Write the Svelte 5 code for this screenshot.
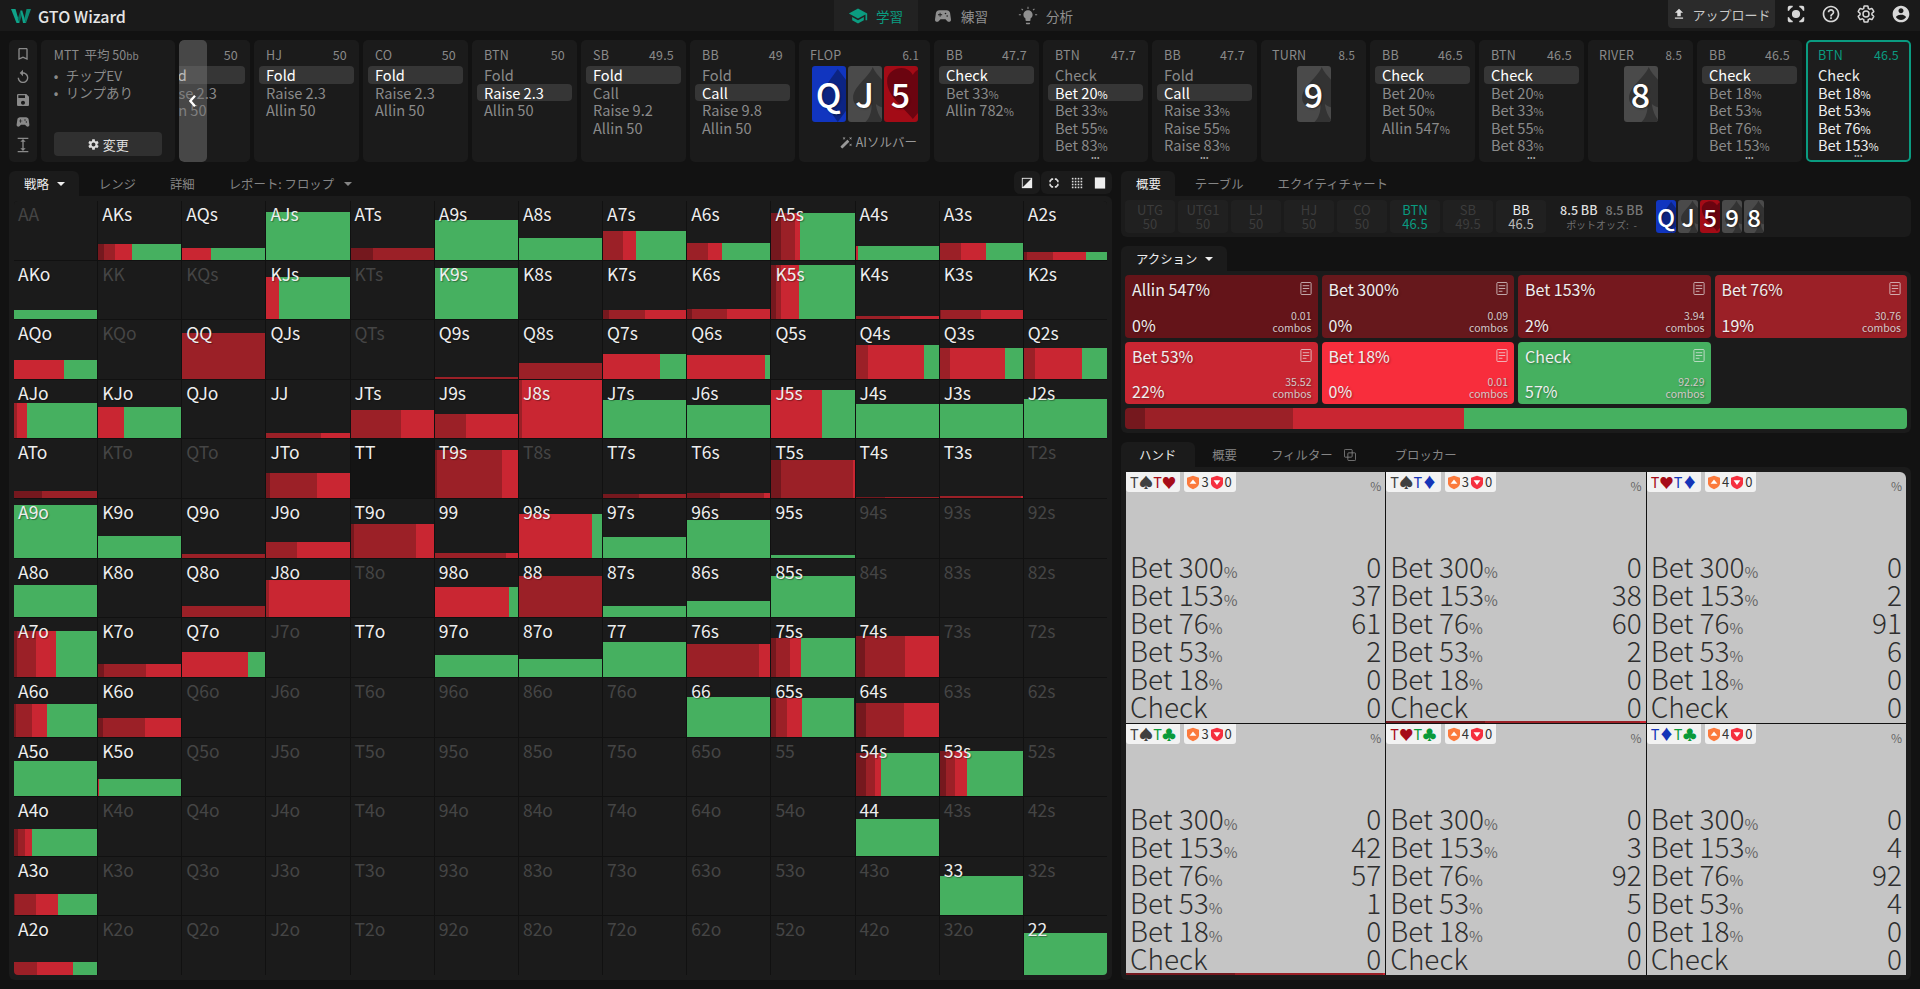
<script>
	const ranks = ['A', 'K', 'Q', 'J', 'T', '9', '8', '7', '6', '5', '4', '3', '2'];
	const colors = ['#75181e', '#9b2027', '#c92632', '#46b060'];

	// hand: [bar height %, dark, mid, bright, green]
	const strat = {
		AKs: [27, 7, 13, 21, 59], AQs: [20, 0, 0, 35, 65], AJs: [82, 0, 0, 0, 100], ATs: [20, 27, 73, 0, 0],
		A9s: [67, 0, 0, 0, 100], A8s: [37, 0, 0, 0, 100], A7s: [48, 0, 24, 16, 60], A6s: [28, 0, 25, 17, 58],
		A5s: [80, 11, 18, 5, 66], A4s: [23, 0, 0, 3, 97], A3s: [28, 0, 26, 30, 44], A2s: [13, 4, 31, 40, 25],
		AKo: [15, 0, 0, 0, 100], KJs: [72, 0, 0, 15, 85], K9s: [87, 0, 0, 0, 100], K8s: [1, 0, 0, 0, 100],
		K7s: [15, 7, 44, 49, 0], K6s: [17, 6, 42, 52, 0], K5s: [92, 6, 6, 21, 67], K4s: [5, 0, 54, 46, 0],
		K3s: [15, 2, 48, 50, 0], K2s: [0],
		AQo: [32, 0, 0, 60, 40], QQ: [78, 0, 100, 0, 0], QJs: [0], Q9s: [3, 0, 100, 0, 0], Q8s: [27, 0, 100, 0, 0],
		Q7s: [43, 0, 0, 68, 32], Q6s: [40, 0, 0, 94, 6], Q5s: [0], Q4s: [57, 0, 15, 67, 18], Q3s: [53, 0, 12, 66, 22],
		Q2s: [52, 0, 14, 56, 30],
		AJo: [60, 0, 4, 12, 84], KJo: [54, 0, 0, 31, 69], QJo: [0], JJ: [10, 0, 66, 34, 0], JTs: [49, 0, 60, 40, 0],
		J9s: [41, 0, 38, 62, 0], J8s: [100, 0, 4, 96, 0], J7s: [66, 0, 0, 0, 100], J6s: [57, 0, 0, 0, 100],
		J5s: [82, 0, 0, 61, 39], J4s: [59, 0, 0, 0, 100], J3s: [59, 0, 0, 0, 100], J2s: [67, 0, 0, 0, 100],
		ATo: [12, 34, 66, 0, 0], JTo: [42, 4, 57, 39, 0], TT: [0], T9s: [82, 3, 78, 19, 0], T7s: [7, 43, 57, 0, 0],
		T6s: [8, 39, 53, 8, 0], T5s: [65, 12, 86, 2, 0], T4s: [2, 36, 64, 0, 0], T3s: [3, 0, 98, 2, 0],
		A9o: [90, 0, 0, 0, 100], K9o: [37, 0, 0, 0, 100], Q9o: [7, 0, 100, 0, 0], J9o: [27, 0, 37, 63, 0],
		T9o: [58, 4, 75, 21, 0], 99: [8, 0, 86, 14, 0], '98s': [75, 0, 0, 88, 12], '97s': [35, 0, 0, 0, 100],
		'96s': [65, 0, 0, 0, 100], '95s': [5, 0, 0, 0, 100],
		A8o: [55, 0, 0, 0, 100], K8o: [0], Q8o: [20, 0, 100, 0, 0], J8o: [63, 0, 3, 97, 0], '98o': [52, 0, 0, 89, 11],
		88: [70, 0, 100, 0, 0], '87s': [20, 0, 0, 0, 100], '86s': [28, 0, 0, 0, 100], '85s': [70, 0, 0, 0, 100],
		A7o: [78, 4, 22, 24, 50], K7o: [22, 7, 51, 42, 0], Q7o: [43, 0, 0, 79, 21], T7o: [0], '97o': [37, 0, 0, 0, 100],
		'87o': [30, 0, 0, 0, 100], 77: [60, 0, 0, 0, 100], '76s': [57, 0, 86, 14, 0], '75s': [67, 5, 17, 14, 64],
		'74s': [70, 11, 49, 40, 0],
		A6o: [55, 3, 19, 18, 60], K6o: [32, 6, 50, 44, 0], 66: [67, 0, 0, 0, 100], '65s': [65, 6, 13, 18, 63],
		'64s': [57, 12, 46, 42, 0],
		A5o: [60, 0, 0, 0, 100], K5o: [30, 0, 0, 1, 99], '54s': [73, 12, 12, 7, 69], '53s': [77, 7, 11, 15, 67],
		A4o: [45, 5, 8, 9, 78], 44: [62, 0, 0, 0, 100],
		A3o: [37, 1, 25, 27, 47], 33: [68, 0, 0, 0, 100],
		A2o: [22, 0, 28, 43, 29], 22: [72, 0, 0, 0, 100]
	};

	let hands = [];
	ranks.forEach((r, i) => {
		ranks.forEach((c, j) => {
			let name = i == j ? r + c : i < j ? r + c + 's' : c + r + 'o';
			hands.push({ name, data: strat[name] });
		});
	});

	const history = [
		{ pos: 'HJ', val: '50', acts: ['Fold', 'Raise 2.3', 'Allin 50'], on: 0 },
		{ pos: 'CO', val: '50', acts: ['Fold', 'Raise 2.3', 'Allin 50'], on: 0 },
		{ pos: 'BTN', val: '50', acts: ['Fold', 'Raise 2.3', 'Allin 50'], on: 1 },
		{ pos: 'SB', val: '49.5', acts: ['Fold', 'Call', 'Raise 9.2', 'Allin 50'], on: 0 },
		{ pos: 'BB', val: '49', acts: ['Fold', 'Call', 'Raise 9.8', 'Allin 50'], on: 1 },
		{ street: 'FLOP', val: '6.1', cards: [['Q', 'd'], ['J', 's'], ['5', 'h']] },
		{ pos: 'BB', val: '47.7', acts: ['Check', 'Bet 33%', 'Allin 782%'], on: 0 },
		{ pos: 'BTN', val: '47.7', acts: ['Check', 'Bet 20%', 'Bet 33%', 'Bet 55%', 'Bet 83%'], on: 1, more: true },
		{ pos: 'BB', val: '47.7', acts: ['Fold', 'Call', 'Raise 33%', 'Raise 55%', 'Raise 83%'], on: 1, more: true },
		{ street: 'TURN', val: '8.5', cards: [['9', 's']] },
		{ pos: 'BB', val: '46.5', acts: ['Check', 'Bet 20%', 'Bet 50%', 'Allin 547%'], on: 0 },
		{ pos: 'BTN', val: '46.5', acts: ['Check', 'Bet 20%', 'Bet 33%', 'Bet 55%', 'Bet 83%'], on: 0, more: true },
		{ street: 'RIVER', val: '8.5', cards: [['8', 's']] },
		{ pos: 'BB', val: '46.5', acts: ['Check', 'Bet 18%', 'Bet 53%', 'Bet 76%', 'Bet 153%'], on: 0, more: true },
		{ pos: 'BTN', val: '46.5', acts: ['Check', 'Bet 18%', 'Bet 53%', 'Bet 76%', 'Bet 153%'], on: -1, more: true, current: true }
	];

	const seats = [
		{ name: 'UTG', val: '50' },
		{ name: 'UTG1', val: '50' },
		{ name: 'LJ', val: '50' },
		{ name: 'HJ', val: '50' },
		{ name: 'CO', val: '50' },
		{ name: 'BTN', val: '46.5', cls: 'hero' },
		{ name: 'SB', val: '49.5' },
		{ name: 'BB', val: '46.5', cls: 'live' }
	];

	const actions = [
		{ name: 'Allin 547%', pct: '0%', combos: '0.01', bg: '#641419' },
		{ name: 'Bet 300%', pct: '0%', combos: '0.09', bg: '#66181c' },
		{ name: 'Bet 153%', pct: '2%', combos: '3.94', bg: '#75181e' },
		{ name: 'Bet 76%', pct: '19%', combos: '30.76', bg: '#9b2027' },
		{ name: 'Bet 53%', pct: '22%', combos: '35.52', bg: '#c92632' },
		{ name: 'Bet 18%', pct: '0%', combos: '0.01', bg: '#f82d3c' },
		{ name: 'Check', pct: '57%', combos: '92.29', bg: '#46b060' }
	];

	const lines = ['Bet 300', 'Bet 153', 'Bet 76', 'Bet 53', 'Bet 18', 'Check'];
	const suitGlyph = { s: '♠', h: '♥', d: '♦', c: '♣' };
	const combos = [
		{ a: 's', b: 'h', up: 3, vals: [0, 37, 61, 2, 0, 0] },
		{ a: 's', b: 'd', up: 3, vals: [0, 38, 60, 2, 0, 0], bar: [38, 60, 2] },
		{ a: 'h', b: 'd', up: 4, vals: [0, 2, 91, 6, 0, 0] },
		{ a: 's', b: 'c', up: 3, vals: [0, 42, 57, 1, 0, 0], bar: [42, 57, 1] },
		{ a: 'h', b: 'c', up: 4, vals: [0, 3, 92, 5, 0, 0] },
		{ a: 'd', b: 'c', up: 4, vals: [0, 4, 92, 4, 0, 0] }
	];
</script>

{#snippet label(text)}
	{#if text.endsWith('%')}{text.slice(0, -1)}<small>%</small>{:else}{text}{/if}
{/snippet}

{#snippet card(rank, suit, mini)}
	<div class="card {suit}" class:mini>
		<svg viewBox="0 0 33 56" preserveAspectRatio="none">
			{#if suit == 'd'}
				<polygon points="25,3 44,29 25,56 7,29" />
			{:else if suit == 's'}
				<path d="M24 1C28 12 44 20 43 34C42 43 32 43 27 38C28 46 31 52 35 56H17C21 52 23 46 23 38C18 44 6 43 5 33C4 21 20 12 24 1Z" />
			{:else}
				<path d="M28 53C18 40 3 30 3 15C3 6 11 2 17 2C22 2 26 5 28 9C30 5 34 2 40 2C46 2 52 6 52 15C52 30 38 40 28 53Z" />
			{/if}
		</svg>
		<span>{rank}</span>
	</div>
{/snippet}

{#snippet gear()}
	<path d="M19.14 12.94c.04-.3.06-.61.06-.94 0-.32-.02-.64-.07-.94l2.03-1.58c.18-.14.23-.41.12-.61l-1.92-3.32c-.12-.22-.37-.29-.59-.22l-2.39.96c-.5-.38-1.03-.7-1.62-.94l-.36-2.54c-.04-.24-.24-.41-.48-.41h-3.84c-.24 0-.43.17-.47.41l-.36 2.54c-.59.24-1.13.57-1.62.94l-2.39-.96c-.22-.08-.47 0-.59.22L2.74 8.87c-.12.21-.08.47.12.61l2.03 1.58c-.05.3-.09.63-.09.94s.02.64.07.94l-2.03 1.58c-.18.14-.23.41-.12.61l1.92 3.32c.12.22.37.29.59.22l2.39-.96c.5.38 1.03.7 1.62.94l.36 2.54c.05.24.24.41.48.41h3.84c.24 0 .44-.17.47-.41l.36-2.54c.59-.24 1.13-.56 1.62-.94l2.39.96c.22.08.47 0 .59-.22l1.92-3.32c.12-.22.07-.47-.12-.61l-2.01-1.58zM12 15.6c-1.98 0-3.6-1.62-3.6-3.6s1.62-3.6 3.6-3.6 3.6 1.62 3.6 3.6-1.62 3.6-3.6 3.6z" />
{/snippet}

{#snippet gamepad()}
	<path d="M21.58 16.09l-1.09-7.66C20.21 6.46 18.52 5 16.53 5H7.47C5.48 5 3.79 6.46 3.51 8.43l-1.09 7.66C2.2 17.63 3.39 19 4.94 19c.68 0 1.32-.27 1.8-.75L9 16h6l2.25 2.25c.48.48 1.13.75 1.8.75 1.56 0 2.75-1.37 2.53-2.91zM11 11H9v2H8v-2H6v-1h2V8h1v2h2v1zm4-1c-.55 0-1-.45-1-1s.45-1 1-1 1 .45 1 1-.45 1-1 1zm2 3c-.55 0-1-.45-1-1s.45-1 1-1 1 .45 1 1-.45 1-1 1z" />
{/snippet}

<div class="page">
	<header class="topbar">
		<div class="brand">
			<svg class="logo" viewBox="0 0 20 14">
				<polygon points="0,0 4.5,0 8.5,14 5.5,14" fill="#0fa389" />
				<polygon points="6.8,9.5 9.4,1.5 11.2,5 8.5,14" fill="#0a6f5d" />
				<polygon points="9.4,1.5 11.2,1.5 15,14 12,14" fill="#0fa389" />
				<polygon points="15.5,0 20,0 15,14 13.5,9.5" fill="#0c8a73" />
			</svg>
			<span>GTO Wizard</span>
		</div>
		<nav class="nav">
			<div class="nav-item active">
				<svg viewBox="0 0 24 24"><path d="M5 13.18v4L12 21l7-3.82v-4L12 17l-7-3.82zM12 3L1 9l11 6 9-4.91V17h2V9L12 3z" /></svg>
				学習
			</div>
			<div class="nav-item">
				<svg viewBox="0 0 24 24">{@render gamepad()}</svg>
				練習
			</div>
			<div class="nav-item">
				<svg viewBox="0 0 24 24">
					<path d="M9.5 21c0 .55.45 1 1 1h3c.55 0 1-.45 1-1v-1h-5v1zM12 5c-3 0-5.5 2.4-5.5 5.4 0 1.9 1 3.5 2.5 4.5V17c0 .55.45 1 1 1h4c.55 0 1-.45 1-1v-2.1c1.5-1 2.5-2.6 2.5-4.5C17.5 7.4 15 5 12 5z" />
					<path d="M11.4 1h1.2v2.5h-1.2zM3.8 3.8l.9-.9 1.7 1.7-.9.9zM19.3 2.9l.9.9-1.7 1.7-.9-.9zM1 10h2.5v1.2H1zM20.5 10H23v1.2h-2.5z" />
				</svg>
				分析
			</div>
		</nav>
		<div class="tools">
			<div class="upload">
				<svg viewBox="0 0 24 24"><path d="M9 16h6v-6h4l-7-7-7 7h4v6zm-4 2h14v2H5v-2z" /></svg>
				アップロード
			</div>
			<svg class="tool" viewBox="0 0 24 24" fill="none" stroke="currentColor" stroke-width="1.8">
				<path d="M3 8V4.5C3 3.7 3.7 3 4.5 3H8M16 3h3.5c.8 0 1.5.7 1.5 1.5V8M21 16v3.5c0 .8-.7 1.5-1.5 1.5H16M8 21H4.5C3.7 21 3 20.3 3 19.5V16" />
				<circle cx="12" cy="12" r="4" />
			</svg>
			<svg class="tool" viewBox="0 0 24 24"><path d="M11 18h2v-2h-2v2zm1-16C6.48 2 2 6.48 2 12s4.48 10 10 10 10-4.48 10-10S17.52 2 12 2zm0 18c-4.41 0-8-3.59-8-8s3.59-8 8-8 8 3.59 8 8-3.59 8-8 8zm0-14c-2.21 0-4 1.79-4 4h2c0-1.1.9-2 2-2s2 .9 2 2c0 2-3 1.75-3 5h2c0-2.25 3-2.5 3-5 0-2.21-1.79-4-4-4z" /></svg>
			<svg class="tool gear" viewBox="0 0 24 24">{@render gear()}</svg>
			<svg class="tool" viewBox="0 0 24 24"><path d="M12 2C6.48 2 2 6.48 2 12s4.48 10 10 10 10-4.48 10-10S17.52 2 12 2zm0 3c1.66 0 3 1.34 3 3s-1.34 3-3 3-3-1.34-3-3 1.34-3 3-3zm0 14.2c-2.5 0-4.71-1.28-6-3.22.03-1.99 4-3.08 6-3.08 1.99 0 5.97 1.09 6 3.08-1.29 1.94-3.5 3.22-6 3.22z" /></svg>
		</div>
	</header>

	<section class="history">
		<div class="side-icons">
			<svg viewBox="0 0 24 24"><path d="M17 3H7c-1.1 0-2 .9-2 2v16l7-3 7 3V5c0-1.1-.9-2-2-2zm0 15l-5-2.18L7 18V5h10v13z" /></svg>
			<svg viewBox="0 0 24 24"><path d="M12 5V1L7 6l5 5V7c3.31 0 6 2.69 6 6s-2.69 6-6 6-6-2.69-6-6H4c0 4.42 3.58 8 8 8s8-3.58 8-8-3.58-8-8-8z" /></svg>
			<svg viewBox="0 0 24 24"><path d="M17 3H5c-1.11 0-2 .9-2 2v14c0 1.1.89 2 2 2h14c1.1 0 2-.9 2-2V7l-4-4zm-5 16c-1.66 0-3-1.34-3-3s1.34-3 3-3 3 1.34 3 3-1.34 3-3 3zm3-10H5V5h10v4z" /></svg>
			<svg viewBox="0 0 24 24">{@render gamepad()}</svg>
			<svg viewBox="0 0 24 24"><path d="M13 6.99h3L12 3 8 6.99h3v10.02H8L12 21l4-3.99h-3zM4 1h16v2H4zM4 21h16v2H4z" /></svg>
		</div>

		<div class="info">
			<div class="info-title">MTT&nbsp; 平均 50<small>bb</small></div>
			<ul>
				<li>チップEV</li>
				<li>リンプあり</li>
			</ul>
			<div class="change">
				<svg viewBox="0 0 24 24">{@render gear()}</svg>
				変更
			</div>
		</div>

		<div class="scrolled">
			<div class="hist-card inner">
				<div class="hist-head"><span></span><span>50</span></div>
				<div class="act on">Fold</div>
				<div class="act">Raise 2.3</div>
				<div class="act">Allin 50</div>
			</div>
			<div class="scroll-btn">
				<svg viewBox="0 0 24 24" fill="none" stroke="currentColor" stroke-width="3.5"><path d="M15 4l-7 8 7 8" /></svg>
			</div>
		</div>

		{#each history as h}
			{#if h.street}
				<div class="hist-card street" class:flop={h.cards.length > 1}>
					<div class="hist-head"><span>{h.street}</span><span class="pot">{h.val}</span></div>
					<div class="board">
						{#each h.cards as c}
							{@render card(c[0], c[1], false)}
						{/each}
					</div>
					{#if h.cards.length > 1}
						<div class="solver">
							<svg viewBox="0 0 24 24"><path d="M7.5 5.6L10 7 8.6 4.5 10 2 7.5 3.4 5 2l1.4 2.5L5 7zm12 9.8L17 14l1.4 2.5L17 19l2.5-1.4L22 19l-1.4-2.5L22 14zM22 2l-2.5 1.4L17 2l1.4 2.5L17 7l2.5-1.4L22 7l-1.4-2.5zm-7.63 5.29c-.39-.39-1.02-.39-1.41 0L1.29 18.96c-.39.39-.39 1.02 0 1.41l2.34 2.34c.39.39 1.02.39 1.41 0L16.7 11.05c.39-.39.39-1.02 0-1.41l-2.33-2.35z" /></svg>
							AIソルバー
						</div>
					{/if}
				</div>
			{:else}
				<div class="hist-card" class:current={h.current}>
					<div class="hist-head"><span>{h.pos}</span><span>{h.val}</span></div>
					{#each h.acts as a, i}
						<div class="act" class:on={i == h.on}>{@render label(a)}</div>
					{/each}
					{#if h.more}<div class="more">•••</div>{/if}
				</div>
			{/if}
		{/each}
	</section>

	<main class="content">
		<div class="left">
			<div class="tabs-row">
				<div class="tabs">
					<div class="tab active">戦略 <i class="caret"></i></div>
					<div class="tab first">レンジ</div>
					<div class="tab">詳細</div>
					<div class="tab">レポート: フロップ <i class="caret dim"></i></div>
				</div>
				<div class="view-tools">
					<div class="view-box">
						<svg viewBox="0 0 14 14"><rect x="1" y="1" width="12" height="12" fill="#eee" /><polygon points="2,2 12,2 2,12" fill="#222" /></svg>
					</div>
					<div class="view-box wide">
						<svg viewBox="0 0 14 14" fill="none" stroke="#ddd" stroke-width="1.8"><path d="M6 2.5H4.5L2.5 4.5V6M8 2.5H9.5L11.5 4.5V6M2.5 8V9.5L4.5 11.5H6M8 11.5H9.5L11.5 9.5V8" /></svg>
						<svg viewBox="0 0 14 14" fill="#ddd">
							{#each [1, 4.4, 7.8, 11.2] as y}
								{#each [1, 4.4, 7.8, 11.2] as x}
									<rect {x} {y} width="1.9" height="1.9" />
								{/each}
							{/each}
						</svg>
						<svg viewBox="0 0 14 14"><rect x="1" y="0.5" width="12" height="13" fill="#eee" /></svg>
					</div>
				</div>
			</div>
			<div class="matrix-panel">
				<div class="matrix">
					{#each hands as h}
						<div class="hand" class:dim={!h.data} class:dark={h.name == 'TT'}>
							{#if h.data && h.data[0]}
								<div class="bar" style="height:{h.data[0]}%">
									{#each h.data.slice(1) as w, i}
										{#if w}<div style="width:{w}%;background:{colors[i]}"></div>{/if}
									{/each}
								</div>
							{/if}
							<span>{h.name}</span>
						</div>
					{/each}
				</div>
			</div>
		</div>

		<div class="right">
			<div class="tabs-row">
				<div class="tabs">
					<div class="tab active">概要</div>
					<div class="tab first">テーブル</div>
					<div class="tab">エクイティチャート</div>
				</div>
			</div>
			<div class="seatbar">
				{#each seats as s}
					<div class="seat {s.cls || ''}">
						<b>{s.name}</b>
						<em>{s.val}</em>
					</div>
				{/each}
				<div class="pot-info">
					<div class="pots"><span>8.5 BB</span><span class="grey">8.5 BB</span></div>
					<div class="odds">ポットオッズ:&nbsp; -</div>
				</div>
				<div class="mini-board">
					{@render card('Q', 'd', true)}
					{@render card('J', 's', true)}
					{@render card('5', 'h', true)}
					{@render card('9', 's', true)}
					{@render card('8', 's', true)}
				</div>
			</div>

			<div class="tabs-row gap">
				<div class="tabs">
					<div class="tab active">アクション <i class="caret"></i></div>
				</div>
			</div>
			<div class="action-panel">
				<div class="action-grid">
					{#each actions as a}
						<div class="action" style="background:{a.bg}">
							<div class="action-top">
								<span>{a.name}</span>
								<svg viewBox="0 0 12 14" fill="none" stroke="currentColor" stroke-width="1">
									<rect x="0.5" y="0.5" width="11" height="13" rx="1" />
									<path d="M2.5 4h7M2.5 7h7M2.5 10h4" />
								</svg>
							</div>
							<div class="action-bottom">
								<span>{a.pct}</span>
								<div class="combos">{a.combos}<br />combos</div>
							</div>
						</div>
					{/each}
				</div>
				<div class="total-bar">
					<div style="width:2.5%;background:#75181e"></div>
					<div style="width:19%;background:#9b2027"></div>
					<div style="width:21.8%;background:#c92632"></div>
					<div style="width:56.7%;background:#46b060"></div>
				</div>
			</div>

			<div class="tabs-row gap">
				<div class="tabs">
					<div class="tab active hand-tab">ハンド</div>
					<div class="tab">概要</div>
					<div class="tab filter">
						フィルター
						<svg class="copy" viewBox="0 0 14 14" fill="none" stroke="currentColor"><rect x="0.5" y="0.5" width="9" height="9" rx="1" /><rect x="4.5" y="4.5" width="9" height="9" rx="1" /></svg>
					</div>
					<div class="tab">ブロッカー</div>
				</div>
			</div>
			<div class="hand-panel">
				<div class="combo-grid">
					{#each combos as c}
						<div class="combo">
							<div class="combo-head">
								<div class="chip">
									<span class={c.a}>T{suitGlyph[c.a]}</span><span class={c.b}>T{suitGlyph[c.b]}</span>
								</div>
								<div class="chip blockers">
									<svg viewBox="0 0 14 16"><path d="M7 0L14 2.5V9C14 12.5 10 15 7 16C4 15 0 12.5 0 9V2.5z" fill="#fb7a3c" /><path d="M7 4.5L11 9.5H3z" fill="#fff" /></svg>
									<span>{c.up}</span>
									<svg viewBox="0 0 14 16"><path d="M7 0L14 2.5V9C14 12.5 10 15 7 16C4 15 0 12.5 0 9V2.5z" fill="#f5303f" /><path d="M7 11L3 5.5H11z" fill="#fff" /></svg>
									<span>0</span>
								</div>
								<div class="pct-head">%</div>
							</div>
							<div class="combo-lines">
								{#each lines as l, i}
									<div class="combo-line">
										<span>{l}{#if l != 'Check'}<small>%</small>{/if}</span>
										<span>{c.vals[i]}</span>
									</div>
								{/each}
							</div>
							{#if c.bar}
								<div class="combo-bar">
									<div style="width:{c.bar[0]}%;background:#75181e"></div>
									<div style="width:{c.bar[1]}%;background:#9b2027"></div>
									<div style="width:{c.bar[2]}%;background:#c92632"></div>
								</div>
							{/if}
						</div>
					{/each}
				</div>
			</div>
		</div>
	</main>
</div>

<style>
	:global(body) {
		background: #121212;
		overflow: hidden;
	}

	.page {
		height: 989px;
		display: flex;
		flex-direction: column;
		font-family: 'Noto Sans CJK JP', 'Noto Sans', sans-serif;
		color: #8a8a8a;
		font-size: 13px;
	}

	small {
		font-size: 0.8em;
	}

	/* top bar */
	.topbar {
		height: 31px;
		background: #1a1a1a;
		display: flex;
		align-items: center;
		flex: none;
	}
	.brand {
		display: flex;
		align-items: center;
		margin-left: 11px;
		gap: 7px;
		color: #e6e6e6;
		font-size: 16px;
		font-weight: 500;
		width: 115px;
		white-space: nowrap;
	}
	.logo {
		width: 20px;
		height: 14px;
		flex: none;
	}
	.nav {
		display: flex;
		margin-left: 708px;
		height: 31px;
		font-size: 13.5px;
	}
	.nav-item {
		display: flex;
		align-items: center;
		gap: 8px;
		padding: 0 15px;
		color: #8f8f8f;
	}
	.nav-item svg {
		width: 20px;
		height: 20px;
		fill: currentColor;
	}
	.nav-item.active {
		background: #222;
		color: #0b9c80;
		padding: 0 15px 0 14px;
	}
	.tools {
		margin-left: auto;
		display: flex;
		align-items: center;
		gap: 15px;
		padding-right: 9px;
		height: 31px;
		align-self: flex-start;
	}
	.upload {
		display: flex;
		align-items: center;
		justify-content: center;
		gap: 6px;
		width: 107px;
		height: 28px;
		margin-top: -3px;
		margin-right: -4px;
		background: #2b2b2b;
		border-radius: 0 0 4px 4px;
		color: #c8c8c8;
		font-size: 13px;
		white-space: nowrap;
	}
	.upload svg {
		width: 14px;
		height: 14px;
		fill: #ddd;
		flex: none;
	}
	.tool {
		width: 20px;
		height: 20px;
		fill: #d8d8d8;
		color: #d8d8d8;
		margin-top: -3px;
	}
	.tool.gear {
		fill: none;
		stroke: #d8d8d8;
		stroke-width: 1.8;
	}

	/* hand history strip */
	.history {
		height: 122px;
		margin: 9px 9px 0;
		display: flex;
		gap: 4px;
		flex: none;
	}
	.side-icons {
		width: 28px;
		background: #1b1b1b;
		border-radius: 5px;
		display: flex;
		flex-direction: column;
		align-items: center;
		justify-content: space-between;
		padding: 6px 0 9px;
		box-sizing: border-box;
	}
	.side-icons svg {
		width: 16px;
		height: 16px;
		fill: #8a8a8a;
	}
	.info {
		width: 135px;
		background: #1b1b1b;
		border-radius: 5px;
		padding: 5px 13px;
		box-sizing: border-box;
		display: flex;
		flex-direction: column;
		font-size: 13px;
	}
	.info-title {
		font-size: 12.5px;
		line-height: 20px;
		color: #8a8a8a;
	}
	.info ul {
		list-style: none;
		margin: 1px 0 0;
		padding: 0;
	}
	.info li {
		height: 17px;
		line-height: 17px;
		padding-left: 12px;
		position: relative;
		font-size: 13.5px;
	}
	.info li::before {
		content: '•';
		position: absolute;
		left: 0;
	}
	.change {
		margin-top: auto;
		margin-bottom: 1px;
		height: 24px;
		width: 108px;
		background: #303030;
		border-radius: 4px;
		color: #ddd;
		display: flex;
		align-items: center;
		justify-content: center;
		gap: 3px;
	}
	.change svg {
		width: 13px;
		height: 13px;
		fill: #ddd;
	}

	.scrolled {
		width: 71px;
		border-radius: 5px;
		overflow: hidden;
		position: relative;
		display: flex;
		justify-content: flex-end;
		background: #1b1b1b;
		flex: none;
	}
	.scroll-btn {
		position: absolute;
		left: 0;
		top: 0;
		bottom: 0;
		width: 28px;
		background: rgba(115, 115, 115, 0.5);
		border-radius: 5px;
		color: #fff;
		display: flex;
		align-items: center;
		justify-content: center;
	}
	.scroll-btn svg {
		width: 16px;
		height: 16px;
	}

	.hist-card {
		width: 105px;
		flex: none;
		box-sizing: border-box;
		background: #1b1b1b;
		border-radius: 5px;
		padding: 6px 5px 0;
		position: relative;
	}
	.hist-head {
		display: flex;
		justify-content: space-between;
		height: 18px;
		line-height: 18px;
		padding: 0 7px;
		font-size: 12.5px;
		margin-bottom: 2px;
		color: #8a8a8a;
		letter-spacing: 0.2px;
	}
	.act {
		height: 17.5px;
		line-height: 17.5px;
		padding: 0 7px;
		border-radius: 4px;
		font-size: 14.6px;
		color: #8a8a8a;
		white-space: nowrap;
	}
	.act small {
		font-size: 11px;
	}
	.act.on {
		background: #363636;
		color: #fff;
	}
	.more {
		position: absolute;
		left: 0;
		right: 0;
		bottom: 2px;
		text-align: center;
		font-size: 7px;
		line-height: 6px;
		letter-spacing: 0.4px;
		color: #aaa;
	}
	.hist-card.current {
		border: 2px solid #0a9b80;
		padding: 4px 3px 0;
		background: #1d1d1d;
	}
	.current .hist-head {
		color: #0a9b80;
	}
	.current .act {
		color: #eee;
	}
	.street.flop {
		width: 131px;
	}
	.street .hist-head {
		padding: 0 6px;
	}
	.pot {
		font-size: 11.5px;
	}
	.board {
		display: flex;
		justify-content: center;
		gap: 2px;
	}
	.solver {
		margin-top: 11px;
		font-size: 12.5px;
		color: #999;
		display: flex;
		justify-content: flex-end;
		align-items: center;
		gap: 3px;
		padding-right: 8px;
		line-height: 18px;
	}
	.solver svg {
		width: 13px;
		height: 13px;
		fill: #999;
	}

	/* playing cards */
	.card {
		width: 34px;
		height: 56px;
		border-radius: 3px;
		position: relative;
		overflow: hidden;
		display: flex;
		align-items: center;
		justify-content: center;
		color: #fff;
		font-size: 34px;
		font-weight: 500;
	}
	.card svg {
		position: absolute;
		inset: 0;
		width: 100%;
		height: 100%;
	}
	.card span {
		position: relative;
		line-height: 1;
		text-shadow: 1px 1px 2px rgba(0, 0, 0, 0.4);
	}
	.card.d {
		background: #1135bf;
	}
	.card.d svg {
		fill: #0c2483;
	}
	.card.s {
		background: #4a4a4a;
	}
	.card.s svg {
		fill: #333;
	}
	.card.h {
		background: #a30b16;
	}
	.card.h svg {
		fill: #6b0410;
	}
	.card.mini {
		width: 20px;
		height: 33px;
		font-size: 24px;
	}

	/* tabs */
	.tabs-row {
		height: 25px;
		display: flex;
		justify-content: space-between;
		flex: none;
	}
	.tabs-row.gap {
		margin-top: 9px;
	}
	.tabs {
		display: flex;
	}
	.tab {
		display: flex;
		align-items: center;
		gap: 6px;
		padding: 0 17px;
		font-size: 12.4px;
		color: #858585;
		white-space: nowrap;
	}
	.tab.first {
		padding-left: 20px;
	}
	.tab.active {
		background: #1b1b1b;
		color: #eee;
		border-radius: 6px 6px 0 0;
		padding: 0 14px 0 15px;
	}
	.tab.hand-tab {
		padding: 0 19px 0 18px;
	}
	.tab.filter {
		padding-right: 22px;
	}
	.caret {
		width: 0;
		height: 0;
		margin-left: 2px;
		border-left: 4px solid transparent;
		border-right: 4px solid transparent;
		border-top: 4px solid #eee;
	}
	.caret.dim {
		border-top-color: #858585;
		margin-left: 4px;
	}
	.copy {
		width: 12px;
		height: 12px;
		margin-left: 5px;
	}
	.view-tools {
		display: flex;
		gap: 1px;
		height: 23px;
	}
	.view-box {
		background: #1b1b1b;
		border-radius: 6px;
		width: 26px;
		display: flex;
		align-items: center;
		justify-content: center;
	}
	.view-box svg {
		width: 12px;
		height: 12px;
	}
	.view-box.wide {
		width: 71px;
		gap: 11px;
	}

	/* main layout */
	.content {
		flex: 1;
		display: flex;
		gap: 9px;
		padding: 9px;
		min-height: 0;
	}
	.left {
		width: 1103px;
		display: flex;
		flex-direction: column;
	}
	.right {
		width: 790px;
		display: flex;
		flex-direction: column;
	}

	/* matrix */
	.matrix-panel {
		flex: 1;
		background: #1b1b1b;
		border-radius: 0 6px 6px 6px;
		padding: 5px;
		min-height: 0;
	}
	.matrix {
		height: 100%;
		display: grid;
		grid-template-columns: repeat(13, 1fr);
		grid-template-rows: repeat(13, 1fr);
		gap: 1px;
		background: #111;
		border-radius: 4px;
		overflow: hidden;
	}
	.hand {
		background: #1b1b1b;
		position: relative;
		overflow: hidden;
		min-height: 0;
	}
	.hand span {
		position: relative;
		display: block;
		padding: 2px 0 0 4px;
		font-size: 17.5px;
		line-height: 22px;
		color: #eee;
		text-shadow: 1px 1px 1px rgba(0, 0, 0, 0.35);
	}
	.hand.dim span {
		color: #454545;
		text-shadow: none;
	}
	.hand.dark {
		background: #141414;
	}
	.bar {
		position: absolute;
		left: 0;
		right: 0;
		bottom: 0;
		display: flex;
	}

	/* seats */
	.seatbar {
		height: 41px;
		background: #1b1b1b;
		border-radius: 0 6px 6px 6px;
		display: flex;
		align-items: center;
		padding: 0 4px;
		gap: 3px;
		box-sizing: border-box;
		flex: none;
	}
	.seat {
		width: 50px;
		height: 33px;
		background: #202020;
		border-radius: 4px;
		display: flex;
		flex-direction: column;
		align-items: center;
		justify-content: center;
		line-height: 13.5px;
		font-size: 13px;
		color: #3c3c3c;
	}
	.seat b,
	.seat em {
		font-weight: 400;
		font-style: normal;
	}
	.seat.hero {
		color: #0a9b80;
	}
	.seat.live {
		color: #bbb;
	}
	.seat.live b {
		color: #eee;
	}
	.pot-info {
		margin-left: 9px;
		width: 87px;
		text-align: center;
		flex: none;
	}
	.pots {
		display: flex;
		gap: 8px;
		justify-content: center;
		font-size: 12.5px;
		font-weight: 500;
		color: #ddd;
		line-height: 16px;
	}
	.grey {
		color: #777;
	}
	.odds {
		font-size: 10px;
		color: #707070;
		line-height: 14px;
	}
	.mini-board {
		display: flex;
		gap: 2px;
		margin-left: 8px;
	}

	/* actions */
	.action-panel {
		background: #1b1b1b;
		border-radius: 0 6px 6px 6px;
		padding: 4px;
		height: 162px;
		box-sizing: border-box;
		display: flex;
		flex-direction: column;
		gap: 4px;
		flex: none;
	}
	.action-grid {
		display: grid;
		grid-template-columns: repeat(4, 1fr);
		grid-template-rows: 63px 62px;
		gap: 4px;
	}
	.action {
		border-radius: 4px;
		color: #eee;
		display: flex;
		flex-direction: column;
		justify-content: space-between;
		padding: 3px 6px 2px 7px;
		text-shadow: 1px 1px 2px rgba(0, 0, 0, 0.35);
		font-size: 16px;
	}
	.action-top {
		display: flex;
		justify-content: space-between;
		line-height: 22px;
	}
	.action-top svg {
		width: 12px;
		height: 13px;
		margin-top: 4px;
		opacity: 0.75;
	}
	.action-bottom {
		display: flex;
		justify-content: space-between;
		align-items: flex-end;
		line-height: 22px;
	}
	.combos {
		text-align: right;
		font-size: 10.5px;
		line-height: 12px;
		color: #d4c8c8;
		padding-bottom: 2px;
	}
	.total-bar {
		height: 21px;
		display: flex;
		border-radius: 4px;
		overflow: hidden;
	}

	/* hand combos */
	.hand-panel {
		flex: 1;
		background: #1b1b1b;
		border-radius: 0 6px 6px 6px;
		padding: 5px;
		min-height: 0;
	}
	.combo-grid {
		height: 100%;
		display: grid;
		grid-template-columns: repeat(3, 1fr);
		grid-template-rows: repeat(2, 1fr);
		gap: 1px;
		background: #111;
		border-radius: 0 6px 0 0;
		overflow: hidden;
	}
	.combo {
		background: #c5c5c5;
		display: flex;
		flex-direction: column;
		justify-content: space-between;
		position: relative;
		overflow: hidden;
		color: #2e2e2e;
	}
	.combo-head {
		display: flex;
		gap: 4px;
		position: relative;
	}
	.chip {
		height: 20px;
		background: #f2f2f2;
		border-radius: 0 0 3px 3px;
		padding: 0 4px;
		display: flex;
		align-items: center;
		font-size: 14.5px;
		line-height: 18px;
	}
	.chip .s {
		color: #404040;
	}
	.chip .h {
		color: #a60c18;
	}
	.chip .d {
		color: #1434b8;
	}
	.chip .c {
		color: #0a9a3a;
	}
	.blockers {
		gap: 2px;
		font-size: 13px;
		color: #333;
		padding: 0 4px 0 3px;
	}
	.blockers svg {
		width: 12px;
		height: 15px;
	}
	.pct-head {
		position: absolute;
		right: 4px;
		top: 5px;
		font-size: 12px;
		color: #666;
	}
	.combo-lines {
		margin-bottom: 3px;
	}
	.combo-line {
		display: flex;
		justify-content: space-between;
		height: 28px;
		line-height: 28px;
		font-size: 28px;
		font-weight: 300;
		padding: 0 4px;
	}
	.combo-line small {
		font-size: 15px;
		color: #666;
		font-weight: 400;
	}
	.combo-bar {
		position: absolute;
		left: 0;
		right: 0;
		bottom: 0;
		height: 2px;
		display: flex;
	}
</style>
